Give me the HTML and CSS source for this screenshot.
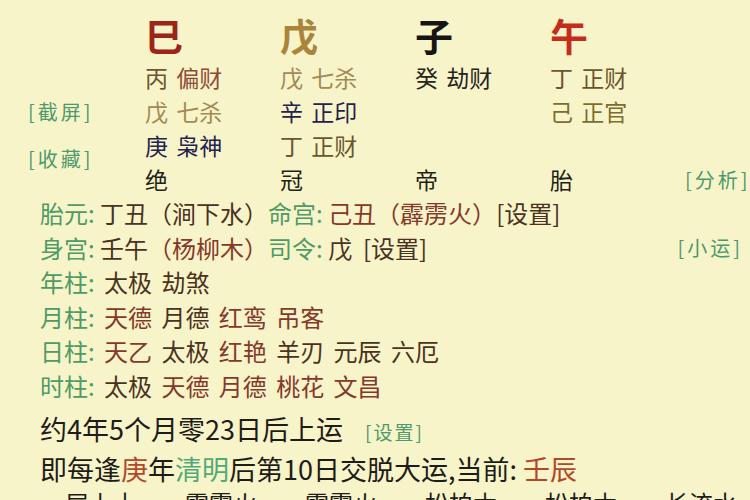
FILE: index.html
```html
<!DOCTYPE html>
<html lang="zh-CN">
<head>
  <meta charset="UTF-8">
  <meta name="viewport" content="width=device-width, initial-scale=1.0">
  <title>排盘</title>
  <link rel="stylesheet" href="styles.css">
</head>
<body>
<div class="chart">
  <div class="side">
    <span class="tag shot">[截屏]</span>
    <span class="tag keep">[收藏]</span>
  </div>

  <div class="pillar">
    <div class="big si">巳</div>
    <div class="stem"><span class="olive-d">丙</span> <span class="rust">偏财</span></div>
    <div class="stem"><span class="khaki">戊 七杀</span></div>
    <div class="stem"><span class="navy">庚 枭神</span></div>
    <div class="stage">绝</div>
  </div>

  <div class="pillar">
    <div class="big wu">戊</div>
    <div class="stem"><span class="khaki">戊 七杀</span></div>
    <div class="stem"><span class="navy">辛 正印</span></div>
    <div class="stem"><span class="olive-d">丁 正财</span></div>
    <div class="stage">冠</div>
  </div>

  <div class="pillar">
    <div class="big zi">子</div>
    <div class="stem"><span class="ink">癸 劫财</span></div>
    <div class="stage">帝</div>
  </div>

  <div class="pillar">
    <div class="big wu2">午</div>
    <div class="stem"><span class="olive-d">丁 正财</span></div>
    <div class="stem"><span class="olive">己 正官</span></div>
    <div class="stage">胎</div>
  </div>

  <div class="side right">
    <span class="tag analyse">[分析]</span>
  </div>
</div>

<div class="info">
  <p class="line"><span class="key">胎元:</span> <span class="dk">丁丑（涧下水）</span><span class="key">命宫:</span> <span class="rd">己丑（霹雳火）</span><span class="dk">[设置]</span></p>
  <p class="line"><span class="tag push">[小运]</span><span class="key">身宫:</span> <span class="dk">壬午</span><span class="rd">（杨柳木）</span><span class="key">司令:</span> <span class="dk">戊&nbsp; [设置]</span></p>
  <p class="line sha"><span class="key">年柱:</span> <span class="dk">太极 劫煞</span></p>
  <p class="line sha"><span class="key">月柱:</span> <span class="rd">天德</span> <span class="dk">月德</span> <span class="rd">红鸾 吊客</span></p>
  <p class="line sha"><span class="key">日柱:</span> <span class="rd">天乙</span> <span class="dk">太极</span> <span class="rd">红艳</span> <span class="dk">羊刃 元辰 六厄</span></p>
  <p class="line sha"><span class="key">时柱:</span> <span class="dk">太极</span> <span class="rd">天德 月德 桃花 文昌</span></p>

  <p class="start">约4年5个月零23日后上运<span class="tag set">[设置]</span></p>
  <p class="turn">即每逢<span class="hl-red">庚</span>年<span class="hl-green">清明</span>后第10日交脱大运,当前: <span class="hl-red">壬辰</span></p>
  <div class="nayin">
    <span>屋上土</span>
    <span>霹雳火</span>
    <span>霹雳火</span>
    <span>松柏木</span>
    <span>松柏木</span>
    <span>长流水</span>
  </div>
</div>
</body>
</html>
```

FILE: styles.css
```css
* {
  margin: 0;
  padding: 0;
  box-sizing: border-box;
}
body {
  width: 750px;
  height: 500px;
  overflow: hidden;
  background-color: #f8f4c9;
  font-family: "Noto Sans CJK SC", "Noto Sans", sans-serif;
  color: #2a241a;
}

/* four pillars */
.chart {
  display: grid;
  grid-template-columns: 145px repeat(4, 135px) 1fr;
  padding-top: 10px;
}
.pillar,
.side {
  display: grid;
  grid-template-rows: 50px repeat(4, 34px);
  align-items: center;
}
.big {
  font-size: 38px;
  font-weight: bold;
  line-height: 50px;
}
.si  { color: #9c2418; }
.wu  { color: #a9843a; }
.zi  { color: #151515; }
.wu2 { color: #c62c1c; }

.stem,
.stage {
  font-size: 23px;
  line-height: 34px;
  word-spacing: 3px;
  white-space: nowrap;
}
.stage {
  grid-row: 5;
  color: #231f18;
}
.olive-d { color: #6a5630; }
.olive   { color: #7b6d32; }
.khaki   { color: #a18a55; }
.rust    { color: #8d4b38; }
.navy    { color: #23234e; }
.ink     { color: #262420; }

.tag {
  font-size: 20px;
  color: #4c9a6b;
  letter-spacing: 3px;
  white-space: nowrap;
}
.side .shot {
  grid-row: 3;
  padding-left: 28px;
}
.side .keep {
  grid-row: 4 / 6;
  padding-left: 28px;
  margin-bottom: 8px;
}
.right .analyse {
  grid-row: 5;
  justify-self: end;
  padding-right: 7px;
}

/* details */
.info {
  padding-left: 40px;
  padding-right: 7px;
}
.line {
  font-size: 24px;
  line-height: 34.5px;
  white-space: nowrap;
}
.sha { word-spacing: 4px; }
.key { color: #4f9a66; }
.dk  { color: #4a321f; }
.rd  { color: #85392a; }
.push { float: right; }

.start {
  margin-top: 6px;
  font-size: 27px;
  line-height: 40px;
  color: #1e1c18;
}
.set {
  margin-left: 22px;
  font-size: 19px;
  letter-spacing: 2px;
}
.turn {
  font-size: 27px;
  line-height: 34px;
  color: #1e1c18;
}
.hl-red   { color: #b1482a; }
.hl-green { color: #4faa78; }

.nayin {
  display: flex;
  gap: 48px;
  padding-left: 25px;
  font-size: 24px;
  line-height: 34px;
  color: #1e1c18;
}
```
